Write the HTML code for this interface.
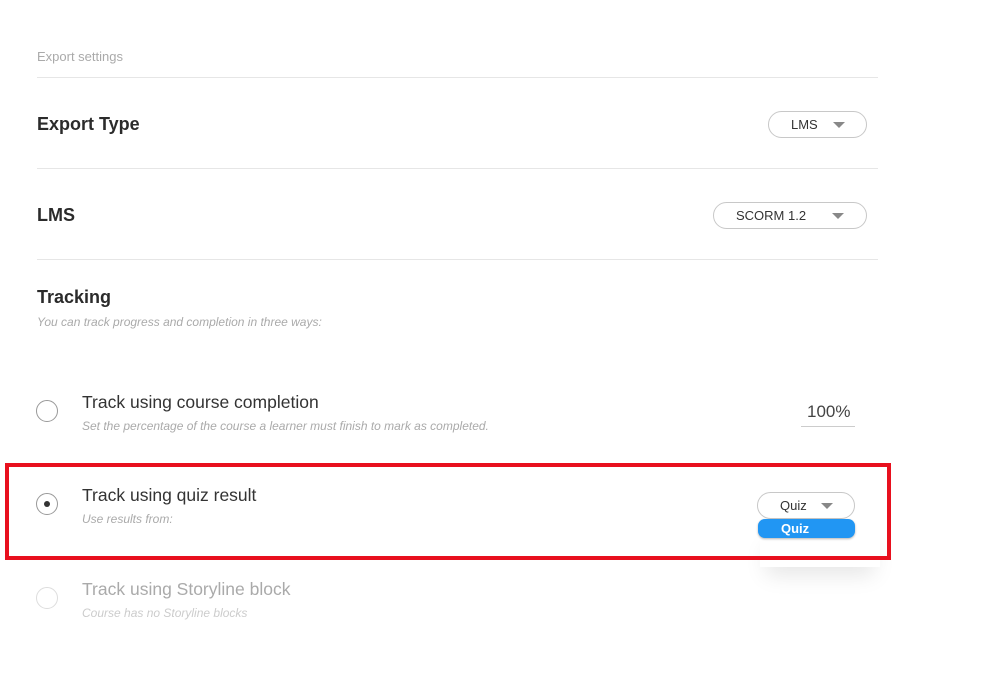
<!DOCTYPE html>
<html><head><style>
body{margin:0;width:999px;height:679px;background:#fff;font-family:"Liberation Sans",sans-serif;position:relative;overflow:hidden;color:#333}
.a{position:absolute;white-space:nowrap}
.line{position:absolute;left:37px;width:841px;height:1px;background:#e6e6e6}
.h{font-size:18px;font-weight:bold;color:#2b2b2b}
.dd{position:absolute;border:1px solid #c8c8c8;border-radius:14px;background:#fff;font-size:13px;color:#333;box-sizing:border-box}
.tri{position:absolute;width:0;height:0;border-left:6px solid transparent;border-right:6px solid transparent;border-top:6px solid #888}
.radio{position:absolute;width:22px;height:22px;border:1.5px solid #999;border-radius:50%;box-sizing:border-box}
.t{font-size:17.5px;color:#333}
.s{font-size:12px;font-style:italic;color:#aaa}
</style></head><body>
<div class="a" style="left:37px;top:49px;font-size:13px;color:#aaa">Export settings</div>
<div class="line" style="top:77px"></div>
<div class="a h" style="left:37px;top:114px">Export Type</div>
<div class="dd" style="left:768px;top:111px;width:99px;height:27px"><span class="a" style="left:22px;top:5px">LMS</span><div class="tri" style="left:64px;top:10px"></div></div>
<div class="line" style="top:168px"></div>
<div class="a h" style="left:37px;top:205px">LMS</div>
<div class="dd" style="left:713px;top:202px;width:154px;height:27px"><span class="a" style="left:22px;top:5px">SCORM 1.2</span><div class="tri" style="left:118px;top:10px"></div></div>
<div class="line" style="top:259px"></div>
<div class="a h" style="left:37px;top:287px">Tracking</div>
<div class="a s" style="left:37px;top:315px">You can track progress and completion in three ways:</div>

<div class="radio" style="left:36px;top:400px"></div>
<div class="a t" style="left:82px;top:392px">Track using course completion</div>
<div class="a s" style="left:82px;top:419px">Set the percentage of the course a learner must finish to mark as completed.</div>
<div class="a" style="left:807px;top:402px;font-size:17px;color:#444">100%</div>
<div class="a" style="left:801px;top:426px;width:54px;height:1px;background:#ccc"></div>

<div class="a" style="left:760px;top:527px;width:120px;height:40px;background:transparent;box-shadow:0 14px 22px -6px rgba(0,0,0,0.10)"></div>
<div class="a" style="left:5px;top:463px;width:886px;height:97px;border:4px solid #e8101e;box-sizing:border-box"></div>
<div class="radio" style="left:36px;top:493px"><div class="a" style="left:6.5px;top:6.5px;width:6px;height:6px;border-radius:50%;background:#333"></div></div>
<div class="a t" style="left:82px;top:485px">Track using quiz result</div>
<div class="a s" style="left:82px;top:512px">Use results from:</div>
<div class="dd" style="left:757px;top:492px;width:98px;height:27px"><span class="a" style="left:22px;top:5px">Quiz</span><div class="tri" style="left:63px;top:10px"></div></div>
<div class="a" style="left:758px;top:519px;width:97px;height:19px;background:#2196f3;border-radius:7px;box-shadow:0 1px 2px rgba(0,0,0,0.3);color:#fff;font-size:13px;font-weight:bold"><span class="a" style="left:23px;top:2px">Quiz</span></div>

<div class="radio" style="left:36px;top:587px;border-color:#ddd"></div>
<div class="a t" style="left:82px;top:579px;color:#aaa">Track using Storyline block</div>
<div class="a s" style="left:82px;top:606px;color:#ccc">Course has no Storyline blocks</div>
</body></html>
